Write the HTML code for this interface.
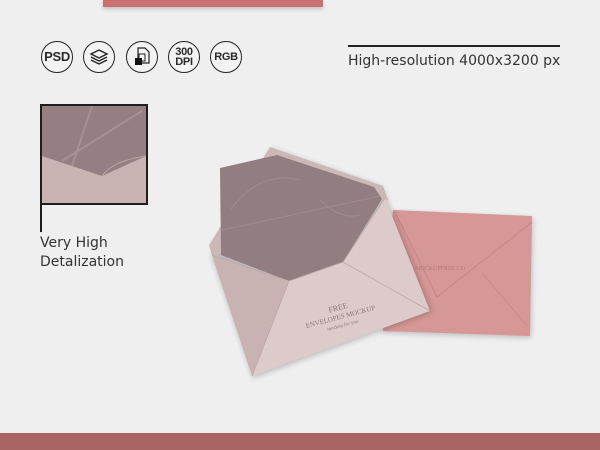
<!DOCTYPE html>
<html><head><meta charset="utf-8"><style>
body{margin:0;width:600px;height:450px;background:#efefef;position:relative;overflow:hidden;font-family:"DejaVu Sans","Liberation Sans",sans-serif;color:#2a2a2a}
.a{position:absolute}
.ic{position:absolute;top:41px;width:32px;height:32px;border:1.3px solid #222;border-radius:50%;box-sizing:border-box;display:flex;align-items:center;justify-content:center;font-family:"Liberation Sans",sans-serif;font-weight:bold;font-size:12px;line-height:10px;text-align:center;letter-spacing:-0.3px;background:#f3f3f3}
</style></head><body>
<div class="a" style="left:103px;top:0;width:220px;height:7px;background:#c97070;box-shadow:0 2px 4px rgba(0,0,0,.2)"></div>
<div class="ic" style="left:41px;font-size:13px">PSD</div>
<div class="ic" style="left:83px"><svg width="20" height="18" viewBox="0 0 20 18"><g fill="none" stroke="#222" stroke-width="1.4"><path d="M10 2 L18 6 L10 10 L2 6Z"/><path d="M2 9 L10 13 L18 9"/><path d="M2 12 L10 16 L18 12"/></g></svg></div>
<div class="ic" style="left:126px"><svg width="18" height="20" viewBox="0 0 18 20"><path d="M5 1h7l4 4v11H5z" fill="none" stroke="#222" stroke-width="1.2"/><rect x="2" y="11" width="7" height="7" fill="#111"/><rect x="6" y="7" width="6" height="7" fill="none" stroke="#222"/></svg></div>
<div class="ic" style="left:168px;font-size:11px">300<br>DPI</div>
<div class="ic" style="left:210px;font-size:11px">RGB</div>
<div class="a" style="left:348px;top:45px;width:212px;height:2px;background:#222"></div>
<div class="a" style="left:348px;top:53px;font-size:14px;color:#333">High-resolution 4000x3200 px</div>
<div class="a" style="left:40px;top:104px;width:108px;height:101px;border:2px solid #1e1e1e;box-sizing:border-box;overflow:hidden;background:#957f83">
<svg width="104" height="97" viewBox="0 0 104 97" style="display:block"><path d="M0 50 L60 70 L104 50 V97 H0Z" fill="#c9b3b2"/><path d="M60 70 Q70 55 104 50" fill="none" stroke="#b9a2a1"/><path d="M50 0 L30 60 M100 5 L20 55" stroke="#a89094" fill="none" stroke-width="2"/></svg></div>
<div class="a" style="left:40px;top:204px;width:2px;height:28px;background:#1e1e1e"></div>
<div class="a" style="left:40px;top:234px;font-size:14px;line-height:19px;color:#333">Very High<br>Detalization</div>
<svg class="a" style="left:0;top:0" width="600" height="450">
<defs><filter id="s"><feGaussianBlur stdDeviation="3"/></filter></defs>
<path d="M393 212 L533 218 L531 338 L383 333Z" fill="#000" opacity=".2" filter="url(#s)"/>
<path d="M393 210 L532 216 L530 336 L383 331Z" fill="#d69896"/>
<path d="M395 212 L437 297 L532 222" fill="none" stroke="#c68584"/>
<path d="M482 273 L528 327" stroke="#c98a88" fill="none"/>
<text x="415" y="270" font-size="6" fill="#b67a7a" font-family="Liberation Serif">MOCKUPFREE.CO</text>
<path d="M212 256 L272 149 L382 187 L432 312 L253 378Z" fill="#000" opacity=".22" filter="url(#s)"/>
<path d="M209 245 L270 147 L383 186 L388 200 L212 256Z" fill="#cdb8b8"/>
<path d="M221 255 L220 168 L277 155 L374 187 L382 199 L343 262 L289 281Z" fill="#927d80"/>
<path d="M230 210 Q260 170 300 180 M320 200 Q340 220 360 215 M222 230 L380 196" stroke="#a08c8e" fill="none"/>
<path d="M212 255 L289 281 L252 376Z" fill="#c8b2b2"/>
<path d="M385 198 L343 262 L289 281 L252 376 L430 311Z" fill="#ddcaca"/>
<path d="M212 255 L289 281 L343 262 L385 198 M289 281 L252 376 M343 262 L430 311" stroke="#bda6a6" fill="none" stroke-width=".8"/>
<g font-family="Liberation Serif" fill="#8b7779" transform="rotate(-15 340 315)"><text x="340" y="310" font-size="8" text-anchor="middle">FREE</text><text x="340" y="319" font-size="7" text-anchor="middle">ENVELOPES MOCKUP</text><text x="340" y="327" font-size="5" text-anchor="middle">mockup for you</text></g>
</svg>
<div class="a" style="left:0;top:433px;width:600px;height:17px;background:#aa6462"></div>
</body></html>
